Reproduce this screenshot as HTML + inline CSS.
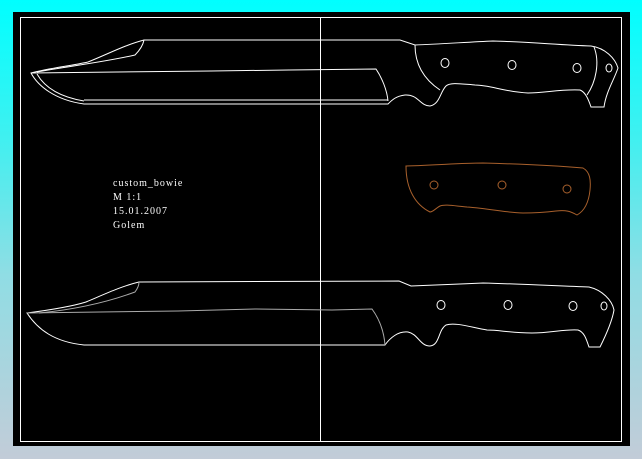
<!DOCTYPE html>
<html><head><style>
html,body{margin:0;padding:0;}
body{width:642px;height:459px;background:linear-gradient(#00ffff 0%,#40f0f0 30%,#90dde4 60%,#c2ccd8 100%);position:relative;overflow:hidden;}
#p{position:absolute;left:13px;top:12px;width:617px;height:434px;background:#000;}
svg{position:absolute;left:0;top:0;}
.t{font-family:"Liberation Serif",serif;font-size:10px;fill:#fff;letter-spacing:1px;}
</style></head><body>
<div id="p"></div>
<svg width="642" height="459" viewBox="0 0 642 459" fill="none" stroke="#fff" stroke-width="1">
<rect x="20.5" y="17.5" width="601" height="424"/>
<line x1="320.5" y1="17" x2="320.5" y2="441"/>
<!-- top knife -->
<path d="M31,73 C50,68 70,66 88,62 C108,54 125,45 144,40 L400,40 L415,45 C440,44 470,42 493,41 C530,42 560,45 591,46 C605,48 615,58 618,68 C614,80 606,92 604,107 L591,107 C588,98 585,92 580,90 C560,89 545,93 528,93 C505,92 490,85 475,85 C462,84 450,82 446,86 C440,92 440,104 430,106 C420,106 418,94 405,95 C396,96 392,100 388,104 L84,104 C55,100 38,86 31,73 Z"/>
<path d="M84,100 L388,100"/>
<path d="M31,73 L211,71 L289,70 L376,69 C382,78 387,90 388,101"/>
<path d="M37,72 C70,66 105,62 135,55 C140,50 143,45 144,40"/>
<path d="M415,45 C415,66 425,80 440,90"/>
<path d="M594,47 C600,62 596,82 587,95"/>
<path d="M37,74 C45,88 60,97 84,101"/>
<ellipse cx="445" cy="63" rx="4" ry="4.5"/><ellipse cx="512" cy="65" rx="4" ry="4.5"/><ellipse cx="577" cy="68" rx="4" ry="4.5"/><ellipse cx="609" cy="68" rx="3" ry="4"/>
<!-- bottom knife -->
<path d="M27,313 C50,310 70,307 86,302 C105,294 122,286 139,282 L399,281 L411,286 C440,285 460,284 483,283 C520,284 560,286 589,287 C602,290 612,300 614,310 C612,322 606,335 600,347 L589,347 C586,338 584,332 578,330 C565,329 550,333 532,333 C510,333 500,330 487,330 C470,327 455,322 446,325 C438,330 440,345 430,346 C420,346 418,334 408,332 C398,331 390,338 385,345 L84,345 C55,342 38,330 27,313 Z"/>
<path stroke="#aaa" d="M27,313 L100,312 L178,311 L256,309 L332,310 L372,309 C380,320 384,332 385,345"/>
<path stroke="#aaa" d="M39,313 C70,310 105,303 135,292 C138,288 139,285 139,282"/>
<ellipse cx="441" cy="305" rx="4" ry="4.5"/><ellipse cx="508" cy="305" rx="4" ry="4.5"/><ellipse cx="573" cy="306" rx="4" ry="4.5"/><ellipse cx="604" cy="306" rx="3" ry="4"/>
<!-- orange handle -->
<g stroke="#a8602c">
<path d="M406,166 C440,165 460,163 483,163 C520,164 560,166 583,168 C590,172 591,180 590,190 C589,200 586,210 577,215 C570,211 566,210 556,211 C540,213 530,213 523,213 C500,212 485,208 467,207 C455,206 445,204 440,206 C436,208 433,212 430,212 C416,205 406,190 406,166 Z"/>
<circle cx="434" cy="185" r="4"/><circle cx="502" cy="185" r="4"/><circle cx="567" cy="189" r="4"/>
</g>
<g stroke="none">
<text class="t" x="113" y="186">custom_bowie</text>
<text class="t" x="113" y="200">M 1:1</text>
<text class="t" x="113" y="214">15.01.2007</text>
<text class="t" x="113" y="228">Golem</text>
</g>
</svg>
</body></html>
